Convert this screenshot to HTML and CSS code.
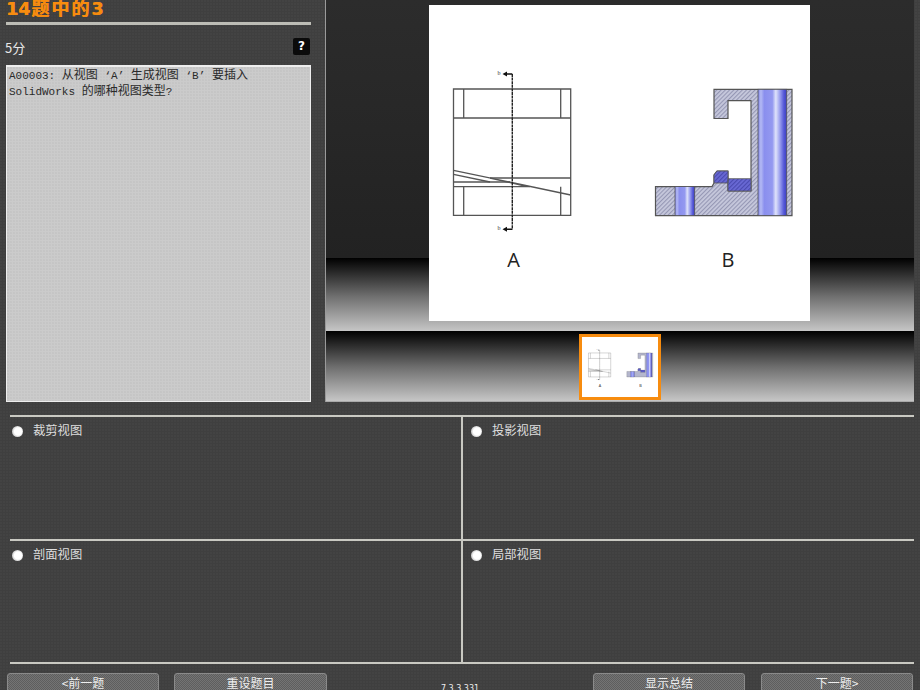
FILE: index.html
```html
<!DOCTYPE html>
<html lang="zh">
<head>
<meta charset="utf-8">
<title>14题中的3</title>
<link rel="stylesheet" href="styles.css">
</head>
<body>
<svg class="defs" width="0" height="0" aria-hidden="true">
  <defs>
    <pattern id="hatch" width="3" height="3" patternUnits="userSpaceOnUse" patternTransform="rotate(45)">
      <rect width="3" height="3" fill="#c6c8dc"/>
      <rect width="1.1" height="3" fill="#9597b4"/>
    </pattern>
    <pattern id="hatchDark" width="3" height="3" patternUnits="userSpaceOnUse" patternTransform="rotate(45)">
      <rect width="3" height="3" fill="#6a6ad6"/>
      <rect width="1.2" height="3" fill="#4a4ab0"/>
    </pattern>
    <linearGradient id="bore">
      <stop offset="0" stop-color="#7f84e6"/>
      <stop offset=".1" stop-color="#b4baf4"/>
      <stop offset=".22" stop-color="#8a8fee"/>
      <stop offset=".5" stop-color="#9499f0"/>
      <stop offset=".62" stop-color="#dfe3fb"/>
      <stop offset=".76" stop-color="#9ba0ee"/>
      <stop offset=".9" stop-color="#5558d8"/>
      <stop offset="1" stop-color="#3c3ec0"/>
    </linearGradient>
    <symbol id="drawing" viewBox="429 5 381 316">
      <g fill="none" stroke="#555" stroke-width="1.3">
        <path d="M453.5 89H570.7V215.3H453.5ZM463.7 89V118M560.7 89V118M463.7 186.7V215.3M560.7 186.7V215.3M453.5 118H570.7M490 178H570.7M453.5 182H510M453.5 186.7H530"/>
        <path d="M453.5 170.3L570.7 195M453.5 174.3L490 182M490 178L525 186"/>
      </g>
      <path d="M512.3 74V229.3" fill="none" stroke="#222" stroke-width="1.4" stroke-dasharray="3 .6"/>
      <path d="M512.3 74H506M512.3 229.3H506" fill="none" stroke="#111" stroke-width="1.5"/>
      <path d="M502.5 74L507 71.5V76.500ZM502.5 229.3L507 226.800V231.800Z" fill="#111"/>
      <text class="tiny" x="497.500" y="75">b</text>
      <text class="tiny" x="497.500" y="230">b</text>
      <text class="mark" x="513.500" y="267">A</text>

      <path d="M714 89.300H792V215.600H655.500V186.600H712L714 183V175L717 171H728V191H751V100.600H728V118.500H714Z" fill="url(#hatch)" stroke="#555" stroke-width="1.2"/>
      <path d="M728 178.700H751V191H728ZM717 171H728V183H714V175Z" fill="url(#hatchDark)" stroke="#555" stroke-width=".8"/>
      <rect x="758" y="89.300" width="28.700" height="126.300" fill="url(#bore)" stroke="#555" stroke-width=".8"/>
      <rect x="675" y="186.600" width="19.700" height="29" fill="url(#bore)" stroke="#555" stroke-width=".8"/>
      <text class="mark" x="728" y="267">B</text>
    </symbol>
  </defs>
</svg>

<main class="app">
  <section class="top">
    <div class="side">
      <h1 class="title">14<span class="han">题中的</span>3</h1>
      <div class="meta">
        <span class="score">5分</span>
        <button class="help" type="button">?</button>
      </div>
      <div class="question">
        <p class="question-text">
          <span class="latin">A00003: </span>从视图<span class="latin"> ‘A’ </span>生成视图<span class="latin"> ‘B’ </span>要插入<br>
          <span class="latin">SolidWorks </span>的哪种视图类型<span class="latin">?</span>
        </p>
      </div>
    </div>
    <div class="media">
      <div class="stage">
        <svg class="figure"><use href="#drawing"/></svg>
      </div>
      <div class="thumbs">
        <svg class="thumb"><use href="#drawing"/></svg>
      </div>
    </div>
  </section>

  <section class="options">
    <label class="option"><span class="radio"></span>裁剪视图</label>
    <label class="option"><span class="radio"></span>投影视图</label>
    <label class="option"><span class="radio"></span>剖面视图</label>
    <label class="option"><span class="radio"></span>局部视图</label>
  </section>

  <footer class="footer">
    <button class="btn" type="button">&lt;前一题</button>
    <button class="btn btn-wide" type="button">重设题目</button>
    <span class="version">7.3.3.331</span>
    <button class="btn" type="button">显示总结</button>
    <button class="btn btn-last" type="button">下一题&gt;</button>
  </footer>
</main>
</body>
</html>
```
FILE: styles.css
```css
html, body {
  margin: 0;
  padding: 0;
  height: 690px;
  overflow: hidden;
}
body {
  background-color: #3f3f3f;
  background-image: radial-gradient(circle at 1px 1px, #464646 0.6px, transparent 0.9px);
  background-size: 3px 3px;
  font-family: "Noto Sans CJK SC", "DejaVu Sans", sans-serif;
  color: #e4e4e4;
}
.defs { position: absolute; }
.app { display: flex; flex-direction: column; height: 690px; }

.top { display: flex; height: 402px; flex: none; }
.side {
  width: 305px;
  padding: 0 14px 0 6px;
  display: flex;
  flex-direction: column;
  flex: none;
}
.title {
  margin: -6px 0 0;
  height: 31px;
  box-sizing: border-box;
  font: bold 17.5px/26px "DejaVu Sans", "Noto Sans CJK SC", sans-serif;
  color: #f78c0f;
  border-bottom: 3px solid #bdbdb6;
  text-shadow: 0.4px 0 0 #f78c0f;
  white-space: nowrap;
}
.han {
  font-size: 18px;
  letter-spacing: 2px;
  margin-left: 1px;
  font-family: "Noto Sans CJK SC", sans-serif;
  font-weight: 700;
}
.meta {
  display: flex;
  justify-content: space-between;
  align-items: center;
  height: 17px;
  margin: 13px 0 10px;
}
.score { font-size: 13px; line-height: 17px; color: #e8e8e8; padding-top: 1px; margin-left: -1px; }
.help {
  width: 17px;
  height: 17px;
  margin-right: 1px;
  padding: 0;
  border: 0;
  border-radius: 2px;
  background: #0b0b0b;
  color: #fff;
  font: bold 12px/17px "DejaVu Sans", sans-serif;
}
.question {
  flex: 1;
  box-sizing: border-box;
  padding: 0 2px;
  background-color: #cbcbcb;
  background-image: radial-gradient(circle at 1px 1px, #c3c3c3 0.6px, transparent 0.9px);
  background-size: 3px 3px;
  border-top: 2px solid #eee;
  border-left: 1px solid #eee;
  border-right: 1px solid #eee;
  border-bottom: 1px solid #eee;
  color: #2a2a2a;
  font-size: 12px;
  line-height: 16px;
}
.question-text { margin: -1px 0 0; }
.latin { font: 11px/1 "Liberation Mono", monospace; white-space: pre; }

.media {
  width: 589px;
  flex: none;
  box-sizing: border-box;
  border-left: 1px solid #9a9a9a;
  display: flex;
  flex-direction: column;
}
.stage {
  height: 331px;
  flex: none;
  display: flex;
  justify-content: center;
  padding-top: 5px;
  box-sizing: border-box;
  background: linear-gradient(#2c2c2c 0, #222 258px, #000 258px, #6e6e6e 296px, #c6c6c6 331px);
}
.figure { width: 381px; height: 316px; background: #fff; flex: none; margin-left: -1px; }
.thumbs {
  flex: 1;
  display: flex;
  justify-content: center;
  align-items: flex-start;
  padding-top: 3px;
  background: linear-gradient(#000 0, #6e6e6e 36px, #c6c6c6 70px);
  border-bottom: 1px solid #aaa;
}
.thumb {
  width: 76px;
  height: 60px;
  background: #fff;
  border: 3px solid #f78c0f;
  margin-left: -1px;
}
.tiny { font: 6px "Liberation Serif", serif; fill: #333; }
.mark { font: 400 20px "Open Sans", sans-serif; fill: #222; text-anchor: middle; }

.options {
  margin: 13px 6px 0 10px;
  display: grid;
  grid-template-columns: 453px 1fr;
  grid-template-rows: 122px 123px;
  border-top: 2px solid #c9c9c2;
  border-bottom: 2px solid #c9c9c2;
  flex: none;
}
.option {
  display: flex;
  align-items: flex-start;
  gap: 10px;
  padding: 5px 2px;
  font-size: 12.3px;
  line-height: 16px;
  color: #dedede;
}
.option:nth-child(odd) { border-right: 2px solid #c9c9c2; }
.option:nth-child(n+3) { border-top: 2px solid #c9c9c2; }
.option:nth-child(even) { padding-left: 8px; }
.radio {
  width: 11px;
  height: 11px;
  margin: 4px 0 0;
  border-radius: 50%;
  background: radial-gradient(circle at 55% 50%, #fff 45%, #8f8f8f 100%);
  flex: none;
}

.footer {
  display: flex;
  gap: 15px;
  padding: 0 7px;
  margin-top: 9px;
}
.btn {
  width: 152px;
  height: 24px;
  flex: none;
  padding: 0 0 4px;
  border: 1px solid #8a8a8a;
  border-radius: 3px 3px 0 0;
  background: repeating-conic-gradient(#747474 0 25%, #5e5e5e 0 50%) 0 0 / 2px 2px;
  color: #eee;
  font: 12px/18px "Noto Sans CJK SC", sans-serif;
}
.btn-wide { width: 153px; }
.btn-last { margin-left: 1px; }
.version {
  flex: 1;
  text-align: center;
  font: 8px/10px "DejaVu Sans", sans-serif;
  color: #eee;
  padding-top: 11px;
  white-space: nowrap;
}
```
